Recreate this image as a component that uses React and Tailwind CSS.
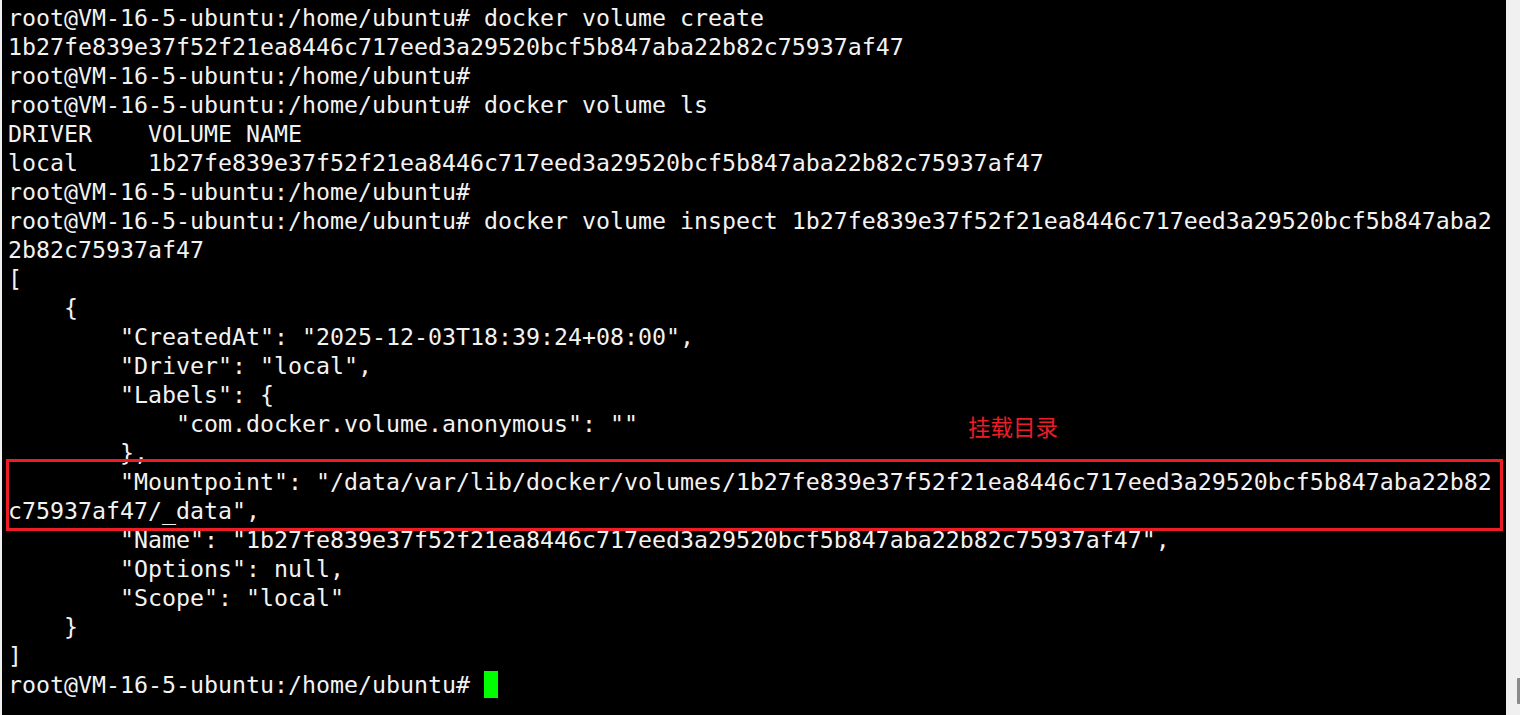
import React from 'react';

const HASH = '1b27fe839e37f52f21ea8446c717eed3a29520bcf5b847aba22b82c75937af47';
const PROMPT = 'root@VM-16-5-ubuntu:/home/ubuntu#';

const lines = [
    `${PROMPT} docker volume create`,
    HASH,
    PROMPT,
    `${PROMPT} docker volume ls`,
    'DRIVER    VOLUME NAME',
    `local     ${HASH}`,
    PROMPT,
    `${PROMPT} docker volume inspect 1b27fe839e37f52f21ea8446c717eed3a29520bcf5b847aba2`,
    '2b82c75937af47',
    '[',
    '    {',
    '        "CreatedAt": "2025-12-03T18:39:24+08:00",',
    '        "Driver": "local",',
    '        "Labels": {',
    '            "com.docker.volume.anonymous": ""',
    '        },',
    '        "Mountpoint": "/data/var/lib/docker/volumes/1b27fe839e37f52f21ea8446c717eed3a29520bcf5b847aba22b82',
    'c75937af47/_data",',
    `        "Name": "${HASH}",`,
    '        "Options": null,',
    '        "Scope": "local"',
    '    }',
    ']',
];

export default function App() {
    return (
        <div className="flex w-[1520px] h-[715px] overflow-hidden bg-[#f0f0f0]">
            {/* Terminal area */}
            <div
                className="relative ml-[2px] w-[1504px] h-full bg-black text-[#f2f2f2] text-[23.25px] pt-[3px] pl-[6px]"
                style={{ fontFamily: '"DejaVu Sans Mono", "Liberation Mono", monospace' }}
            >
                {lines.map((line, i) => (
                    <div key={i} className="h-[29px] leading-[29px] whitespace-pre">{line}</div>
                ))}
                <div className="h-[29px] leading-[29px] whitespace-pre flex items-center">
                    <span>{PROMPT} </span>
                    <span className="inline-block w-[14px] h-[27px] bg-[#00ff00]"></span>
                </div>

                {/* Annotation */}
                <div
                    className="absolute left-[966px] top-[411px] text-[22.5px] leading-[30px] text-[#ee1c25]"
                    style={{ fontFamily: '"Noto Sans CJK SC", "Noto Sans", sans-serif' }}
                >
                    挂载目录
                </div>
                <div className="absolute left-[4px] top-[459px] w-[1497px] h-[72px] border-[3px] border-[#ee1c25]"></div>
            </div>

            {/* Scrollbar */}
            <div className="flex-1 flex flex-col justify-end items-end pb-[11px]">
                <div className="w-[3px] h-[26px] rounded-l-[1px] bg-[#8a8a8a]"></div>
            </div>
        </div>
    );
}
